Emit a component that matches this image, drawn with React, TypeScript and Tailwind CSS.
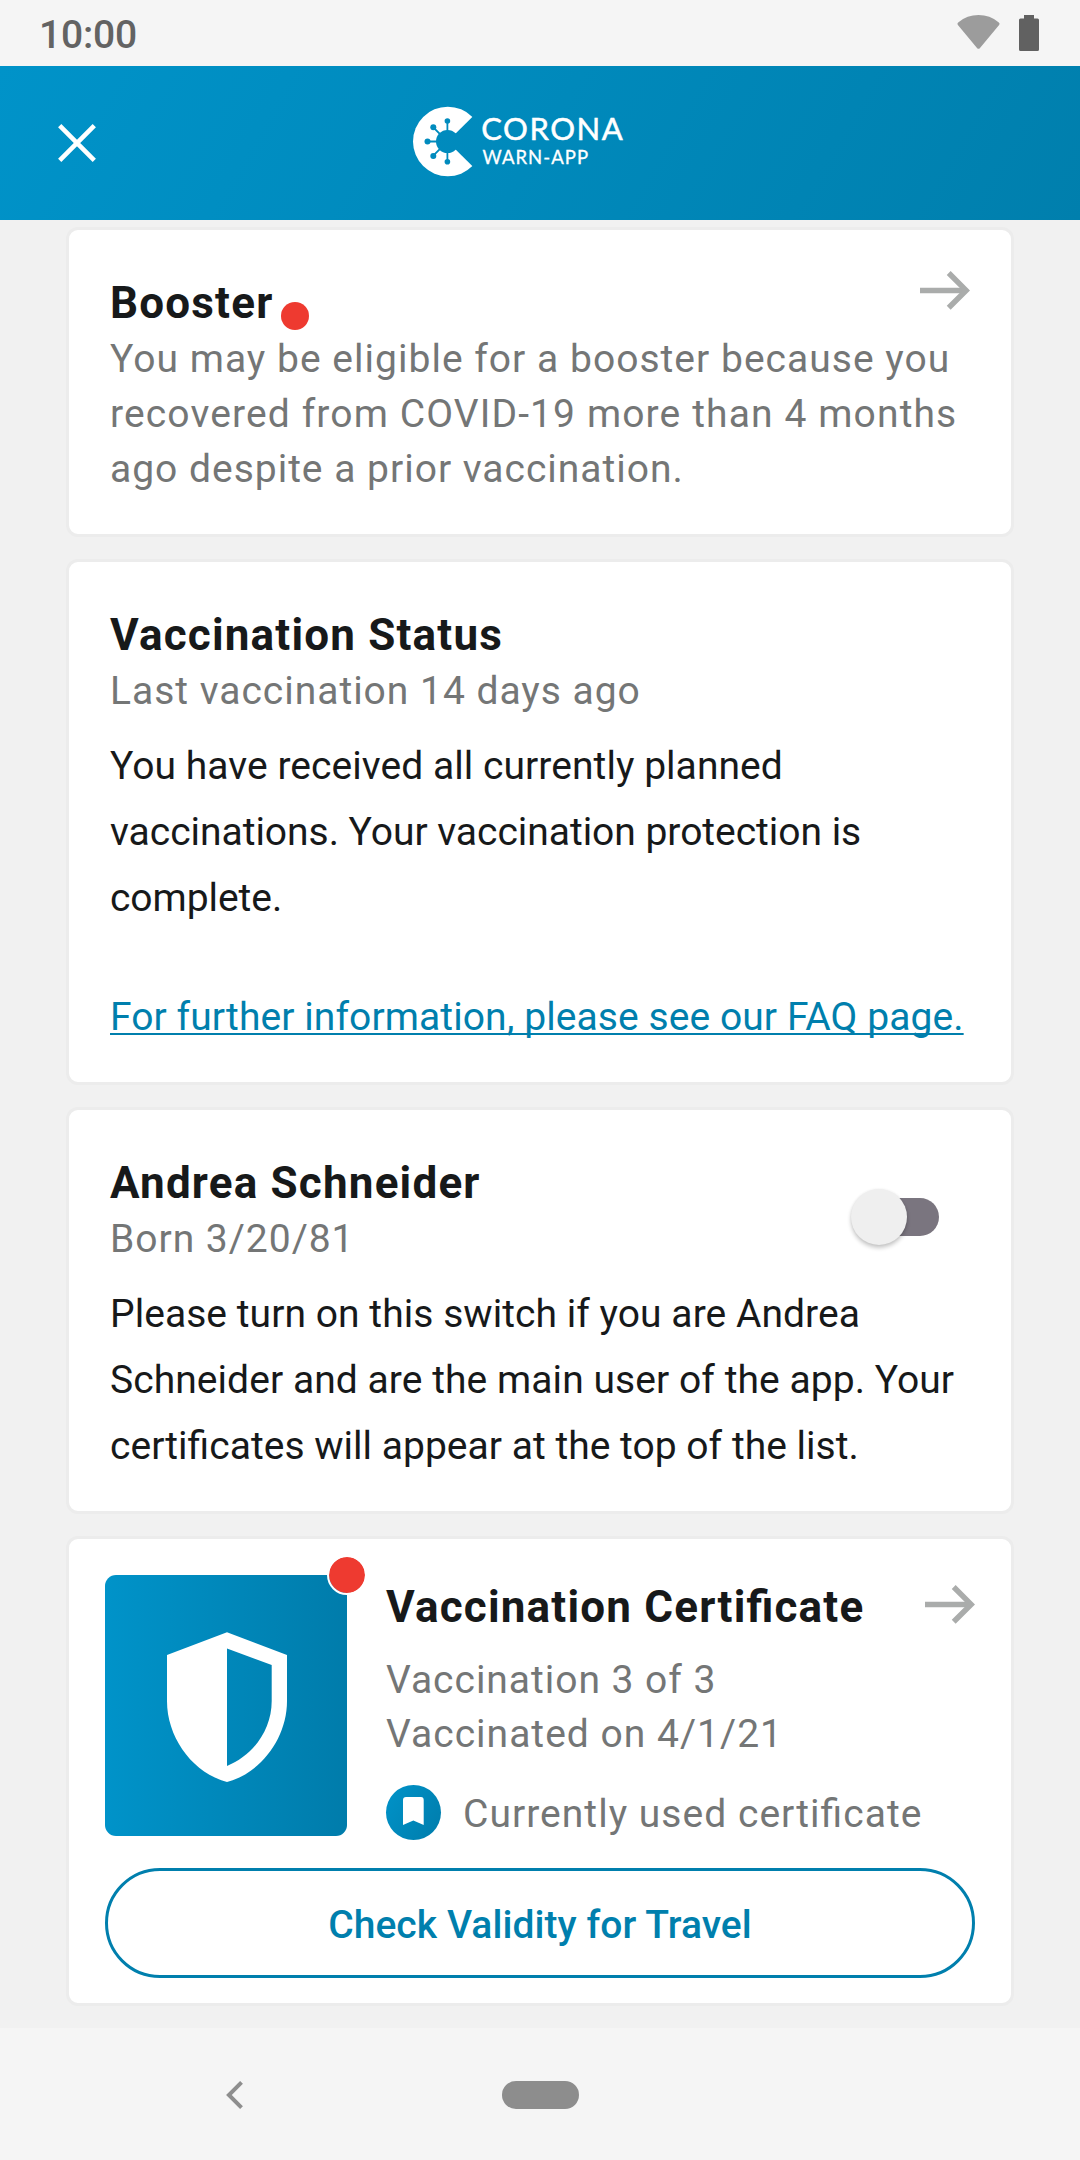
import type { ReactNode } from "react";

function Card({ className, children }: { className: string; children: ReactNode }) {
  return (
    <section className={`box-border w-[948px] shrink-0 rounded-[12px] border-[3px] border-[#ececec] bg-white ${className}`}>
      {children}
    </section>
  );
}

function Title({ children }: { children: ReactNode }) {
  return (
    <h2 className="text-[44px] leading-[54px] font-bold tracking-[1.19px] whitespace-nowrap text-[#17191a] [font-feature-settings:'liga']">
      {children}
    </h2>
  );
}

function Arrow() {
  return (
    <svg className="block h-10 w-[50px] shrink-0" viewBox="0 0 50 40" fill="none" stroke="#aaacab" strokeWidth="5.5">
      <path d="M0 20.4H46" />
      <path d="M28.7 3L46.1 20.4L28.7 37.8" />
    </svg>
  );
}

function StatusBar() {
  return (
    <div className="flex h-[66px] shrink-0 items-start justify-between bg-[#f5f5f5] pr-[41px] pl-[39px]">
      <span className="mt-3 text-[39px] leading-[46px] font-medium tracking-[-0.2px] text-[#636363]">10:00</span>
      <div className="mt-[15px] flex gap-[19px]">
        <svg className="block h-[37px] w-[43px]" viewBox="0 0 43 37">
          <path
            d="M22.8 33.2Q21.5 34.4 20.2 33.2L.9 10Q-.2 8.2 1.5 7.2Q10 0 21.5 0T41.5 7.2Q43.2 8.2 42.1 10Z"
            fill="#9c9c9c"
          />
        </svg>
        <svg className="block h-[37px] w-5" viewBox="0 0 20 37" fill="#616161">
          <path d="M5 0h10v3.5h3.5q1.5 0 1.5 1.5v29.5q0 1.5-1.5 1.5h-17q-1.5 0-1.5-1.5V5q0-1.5 1.5-1.5H5Z" />
        </svg>
      </div>
    </div>
  );
}

function Logo() {
  return (
    <svg className="block h-[72px] w-[214px]" viewBox="412 106 214 72">
      <mask id="virus">
        <circle cx="447.8" cy="141.5" r="34.8" fill="#fff" />
        <path d="M447.5 141.5L490 99.5V183.5Z" fill="#000" />
        <circle cx="447.5" cy="141.5" r="11.5" fill="#000" />
        <path
          d="M447.4 141.5V121M447.4 141.5V162M447.4 141.5H427M447.4 141.5L433.3 127.4M447.4 141.5L433.3 155.7"
          stroke="#000"
          strokeWidth="1.8"
        />
        <circle cx="447.4" cy="121" r="2.8" />
        <circle cx="433.3" cy="127.3" r="3" />
        <circle cx="427.5" cy="141.6" r="3" />
        <circle cx="433.3" cy="155.9" r="3" />
        <circle cx="447.4" cy="161.8" r="2.8" />
      </mask>
      <rect x="412" y="106" width="72" height="72" fill="#fff" mask="url(#virus)" />
      <g fill="#fff" stroke="#fff" className="font-['Lato'] font-normal">
        <text x="481.3" y="140" textLength="141.5" className="text-[31px]" strokeWidth=".5">
          CORONA
        </text>
        <text x="482.5" y="163.7" textLength="105.5" className="text-[18.5px]" strokeWidth=".3">
          WARN-APP
        </text>
      </g>
    </svg>
  );
}

function Header() {
  return (
    <header className="grid h-[154px] shrink-0 grid-cols-[412px_1fr] bg-[linear-gradient(120deg,#0093c9,#007fad)]">
      <svg className="mt-[58px] ml-[58px] block h-[38px] w-[38px]" viewBox="0 0 38 38" stroke="#fff" strokeWidth="4.6">
        <path d="M1.7 1.7L36.3 36.3M36.3 1.7L1.7 36.3" />
      </svg>
      <div className="pt-10">
        <Logo />
      </div>
    </header>
  );
}

export default function App() {
  return (
    <div className="flex h-[2160px] w-[1080px] flex-col overflow-hidden bg-[#f1f1f1] font-['Roboto',sans-serif]">
      <StatusBar />
      <Header />

      <main className="flex h-[1808px] shrink-0 flex-col items-center gap-[22px] pt-[7px]">
        <Card className="h-[310px] px-[41px] pt-10">
          <div className="flex items-start justify-between">
            <div className="mt-[6px] flex items-start gap-2">
              <Title>Booster</Title>
              <span className="mt-[26px] size-7 rounded-full bg-[#ee3a30]" />
            </div>
            <Arrow />
          </div>
          <p className="mt-[2px] text-[39px] leading-[55px] whitespace-nowrap text-[#747676]">
            <span className="tracking-[1.02px]">You may be eligible for a booster because you</span>
            <br />
            <span className="tracking-[1.12px]">recovered from COVID-19 more than 4 months</span>
            <br />
            <span className="tracking-[0.99px]">ago despite a prior vaccination.</span>
          </p>
        </Card>

        <Card className="h-[526px] px-[41px] pt-[46px]">
          <Title>Vaccination Status</Title>
          <p className="mt-[2px] text-[39px] leading-[55px] tracking-[0.98px] text-[#747676]">
            Last vaccination 14 days ago
          </p>
          <p className="mt-[14px] text-[39px] leading-[66px] whitespace-nowrap text-[#17191a] [font-feature-settings:'liga']">
            <span className="tracking-[0.05px]">You have received all currently planned</span>
            <br />
            <span className="tracking-[-0.03px]">vaccinations. Your vaccination protection is</span>
            <br />
            <span className="tracking-[-0.05px]">complete.</span>
          </p>
          <a className="mt-[53px] block text-[39px] leading-[66px] tracking-[0.08px] whitespace-nowrap text-[#007fad] underline decoration-2 underline-offset-[3px] [text-decoration-skip-ink:none]">
            For further information, please see our FAQ page.
          </a>
        </Card>

        <Card className="h-[407px] px-[41px] pt-[46px]">
          <div className="flex justify-between">
            <div>
              <Title>Andrea Schneider</Title>
              <p className="mt-[2px] text-[39px] leading-[55px] tracking-[0.98px] text-[#747676]">Born 3/20/81</p>
            </div>
            <div className="mt-[42px] mr-[31px] flex h-[38px] w-[79px] items-center rounded-full bg-[#7a757f]">
              <span className="-ml-[9px] size-14 rounded-full bg-[#efefef] shadow-[0_3px_4px_rgba(0,0,0,0.22),0_0_3px_rgba(0,0,0,0.06)]" />
            </div>
          </div>
          <p className="mt-[14px] text-[39px] leading-[66px] whitespace-nowrap text-[#17191a] [font-feature-settings:'liga']">
            <span className="tracking-[0.05px]">Please turn on this switch if you are Andrea</span>
            <br />
            <span className="tracking-[0.06px]">Schneider and are the main user of the app. Your</span>
            <br />
            <span className="tracking-[0.02px]">certificates will appear at the top of the list.</span>
          </p>
        </Card>

        <Card className="h-[470px] p-9">
          <div className="flex h-[261px] gap-[39px]">
            <div className="relative h-[261px] w-[242px] shrink-0 rounded-[11px] bg-[linear-gradient(90deg,#0093c9,#007cab)]">
              <svg className="block h-[261px] w-[242px]" viewBox="105 1575 242 261">
                <path
                  d="M227 1632.3L287 1655V1701C287 1738 261 1773 227 1782C193 1773 167 1738 167 1701V1655ZM227 1648.5V1766C252 1756 271.7 1731 271.7 1701V1665Z"
                  fill="#fff"
                  fillRule="evenodd"
                />
              </svg>
              <span className="absolute -top-[20px] -right-[20px] size-10 rounded-full border-2 border-white bg-[#ee3a30] bg-clip-padding" />
            </div>
            <div className="flex-1">
              <div className="flex items-start justify-between pt-[5px]">
                <Title>Vaccination Certificate</Title>
                <div className="mt-1">
                  <Arrow />
                </div>
              </div>
              <p className="mt-[19px] text-[39px] leading-[54px] text-[#747676]">
                <span className="tracking-[0.97px]">Vaccination 3 of 3</span>
                <br />
                <span className="tracking-[1.02px]">Vaccinated on 4/1/21</span>
              </p>
              <div className="mt-6 flex h-[55px] gap-[22px]">
                <span className="grid size-[55px] place-items-center rounded-full bg-[linear-gradient(120deg,#0093c9,#007cab)]">
                  <svg className="mr-[1px] mb-[4px] block h-7 w-[21px]" viewBox="0 0 21 28">
                    <path d="M3 0H18Q20.7 0 20.7 3V28L10.35 23.5L0 28V3Q0 0 3 0Z" fill="#fff" />
                  </svg>
                </span>
                <span className="pt-[2px] text-[39px] leading-[55px] tracking-[1.03px] whitespace-nowrap text-[#747676] [font-feature-settings:'liga']">
                  Currently used certificate
                </span>
              </div>
            </div>
          </div>
          <button className="mt-8 block h-[110px] w-[870px] rounded-full border-[3px] border-[#007fad] pt-1 text-[39px] leading-[46px] font-medium tracking-[0.07px] text-[#007fad] [font-feature-settings:'liga']">
            Check Validity for Travel
          </button>
        </Card>
      </main>

      <nav className="flex h-[132px] shrink-0 items-start bg-[#f5f5f5] pt-[52px]">
        <svg className="mt-[.5px] ml-[226px] block h-7 w-[17px]" viewBox="0 0 17 28" fill="none" stroke="#8e8e8e" strokeWidth="4">
          <path d="M15.5 1.4L2.9 14L15.5 26.6" />
        </svg>
        <span className="mt-[.5px] ml-[259px] h-7 w-[77px] rounded-full bg-[#8d8d8d]" />
      </nav>
    </div>
  );
}
